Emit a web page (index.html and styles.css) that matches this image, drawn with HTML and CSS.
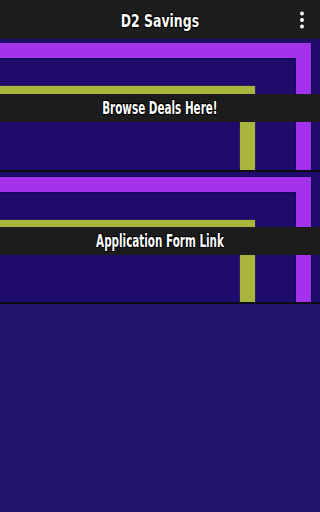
FILE: index.html
```html
<!DOCTYPE html>
<html lang="en">
<head>
<meta charset="utf-8">
<meta name="viewport" content="width=device-width, initial-scale=1">
<title>D2 Savings</title>
<link rel="stylesheet" href="styles.css">
</head>
<body>
<header class="appbar">
  <h1 class="title"><span class="squeeze">D2 Savings</span></h1>
  <button class="menu" aria-label="More options">
    <svg width="6" height="18" viewBox="0 0 6 18"><circle cx="3" cy="2.5" r="2" fill="#fff"/><circle cx="3" cy="9" r="2" fill="#fff"/><circle cx="3" cy="15.5" r="2" fill="#fff"/></svg>
  </button>
</header>
<main class="list">
  <a class="card card-first" href="#">
    <div class="purple"><div class="green"></div></div>
    <span class="label"><span class="squeeze squeeze-label">Browse Deals Here!</span></span>
  </a>
  <a class="card card-second" href="#">
    <div class="purple"><div class="green"></div></div>
    <span class="label"><span class="squeeze squeeze-label">Application Form Link</span></span>
  </a>
</main>
</body>
</html>
```
FILE: styles.css
```css
* { box-sizing: border-box; }
html, body { margin: 0; padding: 0; }
body {
  min-height: 100vh;
  background: #22126a;
  font-family: "DejaVu Sans Condensed", "DejaVu Sans", sans-serif;
  font-stretch: condensed;
  overflow: hidden;
}
.appbar {
  height: 39px;
  background: #1d1d1d;
  display: flex;
  align-items: center;
  justify-content: center;
  position: relative;
}
.title {
  margin: 0;
  color: #fff;
  font-size: 18px;
  font-weight: bold;
  line-height: 1;
  padding-top: 2px;
}
.squeeze {
  display: inline-block;
  transform: scaleX(0.77);
  text-shadow: 1px 1px 0 #000, -1px -1px 0 #000, 1px -1px 0 #000, -1px 1px 0 #000, 0 1px 0 #000, 0 -1px 0 #000;
}
.squeeze-label { transform: scaleX(0.68); }
.menu {
  position: absolute;
  right: 15px;
  top: 11px;
  border: 0;
  padding: 0;
  background: none;
  display: flex;
}
.list { display: flex; flex-direction: column; }
.card {
  display: block;
  position: relative;
  background: #1e0b6c;
  border-bottom: 2px solid #0c0c14;
  text-decoration: none;
}
.card-first { height: 133px; padding-top: 4px; }
.card-second { height: 132px; padding-top: 5px; }
.purple {
  height: 100%;
  margin-right: 9px;
  border-top: 15px solid #a233ea;
  border-right: 15px solid #a233ea;
  padding-top: 28px;
  box-shadow: 1px -1px 0 #160858, inset -1px 1px 0 #160858;
}
.green {
  height: 100%;
  margin-right: 41px;
  border-top: 15px solid #a9b53c;
  border-right: 15px solid #a9b53c;
  box-shadow: 1px -1px 0 #2a2060, -1px 0 0 #2a2060 inset;
}
.label {
  position: absolute;
  left: 0;
  right: 0;
  top: 55px;
  height: 28px;
  background: #1c1c1c;
  color: #fff;
  font-size: 17px;
  font-weight: bold;
  line-height: 1;
  display: flex;
  align-items: center;
  justify-content: center;
}
```
